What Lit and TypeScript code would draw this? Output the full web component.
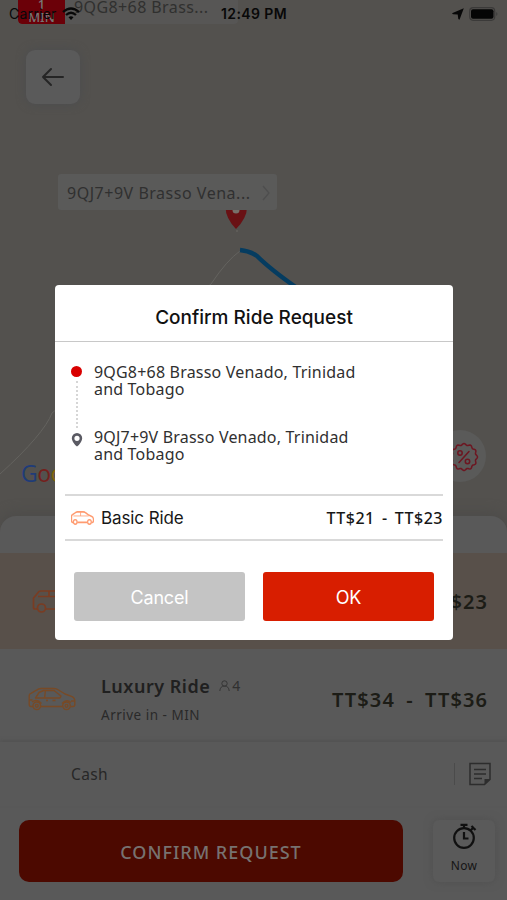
import { LitElement, html, svg, css } from "lit";
import { customElement } from "lit/decorators.js";

const carPaths = svg`
  <path d="M5 19.500H3Q1.200 19.500 1.200 17.500V8.500Q1.200 6.800 3 6.300L8.500 3.200Q10.500 1.800 13 1.500H25.500Q28.500 1.500 30.500 3L37 7L43.500 9.300Q46.800 10.500 46.800 14V17.500Q46.800 19.500 45 19.500H42.500M13 19.500H34" />
  <circle cx="8.800" cy="18.800" r="3.800" /><circle cx="38.500" cy="18.800" r="3.800" />`;

@customElement("app-root")
export class AppRoot extends LitElement {
  static styles = css`
    :host {
      display: block;
      position: relative;
      width: 507px;
      height: 900px;
      overflow: hidden;
      background: #53514e;
      font-family: "Noto Sans", sans-serif;
      color: #272727;
    }
    * { box-sizing: border-box; }
    svg { display: block; fill: none; }
    .screen { display: flex; flex-direction: column; height: 900px; }
    .map { position: relative; height: 516px; flex: none; }
    .roads { position: absolute; inset: 0; }
    .pickup {
      position: absolute; left: 18px; top: 0; width: 220px; height: 24px;
      display: flex; border-radius: 0 0 4px 4px; background: #575655; overflow: hidden;
    }
    .eta {
      width: 47px; height: 24px; background: #6b0008; color: #777;
      font-size: 13px; font-weight: 500; line-height: 13px; text-align: center;
      border-radius: 0 0 0 4px; display: flex; flex-direction: column; justify-content: flex-end;
    }
    .eta span { display: block; }
    .pickup-name { font-size: 16px; line-height: 24px; margin: -5px 0 0 9px; letter-spacing: 0.4px; color: #30302f; white-space: nowrap; }
    .status {
      position: absolute; left: 0; top: 0; width: 507px; height: 27px; padding: 0 8px 0 9px;
      display: grid; grid-template-columns: 1fr auto 1fr; align-items: center;
      font-family: Inter, sans-serif; font-size: 14px; color: #080808;
    }
    .carrier { display: flex; align-items: center; gap: 5px; letter-spacing: 0.25px; }
    .time { font-weight: 600; font-size: 14px; letter-spacing: 0.4px; }
    .power { display: flex; justify-content: flex-end; align-items: center; gap: 5px; }
    .back {
      position: absolute; left: 26px; top: 50px; width: 54px; height: 54px; border-radius: 9px;
      background: #5a5a5a; display: grid; place-items: center; box-shadow: 0 0 10px #4b4d4f;
    }
    .dest {
      position: absolute; left: 58px; top: 174px; width: 219px; height: 36px; border-radius: 3px;
      background: #5a5a59; display: flex; align-items: center; justify-content: space-between;
      padding: 2px 7px 0 9px; font-size: 16px; letter-spacing: 0.52px; color: #303030; white-space: nowrap;
    }
    .google {
      position: absolute; left: 21px; top: 459px; font: 500 23px/28px "Open Sans", sans-serif;
      letter-spacing: -0.6px;
    }
    .g-blue { color: #1f3c78; } .g-red { color: #74201c; } .g-gold { color: #83650a; }
    .promo {
      position: absolute; left: 434px; top: 430px; width: 52px; height: 52px; border-radius: 50%;
      background: #5a5a59; display: grid; place-items: center; padding: 2px 0 0 7px;
    }
    .sheet {
      flex: 1; background: #595959; border-radius: 16px 16px 0 0; padding-top: 37px;
      display: flex; flex-direction: column; box-shadow: 0 -4px 12px #4d4c4a;
    }
    .ride { display: flex; align-items: center; padding: 0 20px 0 28px; }
    .basic { height: 96px; background: #58504a; padding-left: 32px; }
    .luxury { height: 93px; padding-top: 7px; }
    .ride-info { margin-left: 25px; flex: 1; }
    .ride-name { display: flex; align-items: center; gap: 9px; font-size: 18px; line-height: 24px; font-weight: 600; letter-spacing: 0.5px; color: #202020; }
    .seats { display: flex; align-items: center; gap: 2px; font-size: 14px; font-weight: 400; letter-spacing: 0; color: #303030; }
    .arrive { font-size: 13.5px; line-height: 20px; margin-top: 7px; letter-spacing: 0.5px; color: #292929; }
    .fare { font-size: 20px; font-weight: 600; letter-spacing: 1.1px; word-spacing: 5px; color: #1c1c16; white-space: nowrap; margin-right: -1px; }
    .basic .fare { margin-left: auto; }
    .pay {
      height: 64px; display: flex; align-items: center; justify-content: space-between;
      padding: 0 16px 0 71px; box-shadow: 0 -2px 3px #535353; font-size: 15.5px; letter-spacing: 0.35px;
    }
    .note { display: flex; align-items: center; gap: 14px; }
    .divider { width: 1px; height: 22px; background: #4b4b4b; }
    .actions { display: flex; gap: 30px; padding: 14px 12px 0 19px; }
    .confirm {
      width: 384px; height: 62px; border: 0; border-radius: 10px; background: #4c0900; color: #777270;
      font: 500 18px "Noto Sans", sans-serif; letter-spacing: 1px; padding: 2px 0 0;
    }
    .now {
      width: 62px; height: 62px; border-radius: 6px; background: #5a5a5a; box-shadow: 0 0 8px #505050;
      display: flex; flex-direction: column; align-items: center; color: #151515;
      font-size: 12px; letter-spacing: 0.3px; padding-top: 2px; gap: 7px; line-height: 18px;
    }
    .modal {
      position: absolute; left: 55px; top: 285px; width: 398px; height: 355px; border-radius: 4px;
      background: #fff; display: flex; flex-direction: column; color: #303030;
    }
    .title {
      height: 57px; border-bottom: 1px solid #c8c8c8; padding-top: 8px;
      display: flex; align-items: center; justify-content: center;
      font: 500 19px Inter, sans-serif; letter-spacing: 0; color: #111;
    }
    .route { height: 152px; padding: 22px 10px 0 15px; display: grid; grid-template-columns: 13px 1fr; column-gap: 11px; }
    .marks { display: flex; flex-direction: column; align-items: center; padding-top: 2px; }
    .dot { width: 11px; height: 11px; border-radius: 50%; background: #d90000; }
    .dots { height: 47px; border-left: 2px dotted #d6d6d6; margin: 4px 0 5px; }
    .places { display: flex; flex-direction: column; gap: 31px; }
    .place { font-size: 16px; line-height: 17px; letter-spacing: 0.19px; white-space: nowrap; }
    .summary {
      height: 47px; margin: 0 10px; border-top: 2px solid #d9d9d9; border-bottom: 2px solid #d9d9d9;
      display: flex; align-items: center; padding-left: 6px; color: #171717;
    }
    .kind { font: 400 17px Inter, sans-serif; margin-left: 7px; letter-spacing: -0.1px; }
    .price { margin: 1px 0 0 auto; font-size: 16px; font-weight: 500; letter-spacing: 0.5px; word-spacing: 2.5px; white-space: nowrap; }
    .buttons { display: flex; gap: 18px; padding: 31px 19px 0; }
    .btn { flex: 1; height: 49px; border: 0; border-radius: 3px; color: #fff; font: 400 18px Inter, sans-serif; letter-spacing: -0.2px; padding: 1px 0 0; }
    .cancel { background: #c4c4c4; } .ok { background: #d81e00; }
  `;

  render() {
    const badge = Array.from({ length: 97 }, (_, i) => {
      const a = (i / 96) * Math.PI * 2;
      const r = 12.7 + Math.cos(a * 12) * 0.8;
      return `${i ? "L" : "M"}${(15 + r * Math.sin(a)).toFixed(2)} ${(15 - r * Math.cos(a)).toFixed(2)}`;
    }).join("");
    return html`
      <div class="screen">
        <div class="map">
          <svg class="roads" width="507" height="516">
            <path d="M240 251Q227 260 211 284L52 413Q44 434 0 474" stroke="#64635f" stroke-width="1" />
            <path d="M240 250Q250 251 257 256Q270 269 297 288" stroke="#053c60" stroke-width="4.5" />
            <path d="M225.500 207H247Q247 218 236 229Q225.500 218 225.500 207Z" fill="#691114" />
            <circle cx="236" cy="210" r="3.500" fill="#77706a" />
            <circle cx="237" cy="231" r="1" fill="#62605c" />
          </svg>
          <div class="pickup">
            <div class="eta"><span>1</span><span>MIN</span></div>
            <div class="pickup-name">9QG8+68 Brass...</div>
          </div>
          <div class="status">
            <div class="carrier"><span>Carrier</span>
              <svg width="18" height="14" viewBox="0 0 18 14" stroke="#080808" stroke-width="2.300">
                <path d="M1 5Q9-2 17 5M4 8Q9 3.500 14 8" /><path d="M6.500 10.300Q9 8.200 11.500 10.300L9 13Z" fill="#080808" stroke="none" />
              </svg>
            </div>
            <div class="time">12:49 PM</div>
            <div class="power">
              <svg width="12" height="12" viewBox="0 0 12 12"><path d="M11.800.3L0 5.200L1 6.300L5.700 6.500L6.300 11L7.500 11.800Z" fill="#080808" /></svg>
              <svg width="30" height="14" viewBox="0 0 30 14">
                <rect x=".7" y=".7" width="25" height="12.600" rx="3.500" stroke="#3b3a39" stroke-width="1.200" />
                <rect x="2" y="2.200" width="22.500" height="9.600" rx="2" fill="#050505" /><path d="M27.300 5Q29.500 7 27.300 9Z" fill="#3b3a39" />
              </svg>
            </div>
          </div>
          <div class="back">
            <svg width="24" height="20" viewBox="0 0 24 20" stroke="#252525" stroke-width="2" stroke-linecap="round" stroke-linejoin="round"><path d="M22 10H2M10 2L2 10L10 18" /></svg>
          </div>
          <div class="dest"><span>9QJ7+9V Brasso Vena...</span>
            <svg width="8" height="16" viewBox="0 0 8 16" stroke="#4e4e4e" stroke-width="1.300"><path d="M1 1L7 8L1 15" /></svg>
          </div>
          <div class="google"><span class="g-blue">G</span><span class="g-red">o</span><span class="g-gold">o</span></div>
          <div class="promo">
            <svg width="30" height="30" viewBox="0 0 30 30" stroke="#6d1621" stroke-width="1.500">
              <path d="${badge}" stroke-linejoin="round" /><path d="M20 9.500L10 20.500" stroke-linecap="round" />
              <circle cx="11" cy="11" r="2.200" /><circle cx="18.500" cy="19.500" r="2.200" />
            </svg>
          </div>
        </div>
        <div class="sheet">
          <div class="ride basic">
            <svg width="48" height="24" viewBox="0 0 48 24" stroke="#7a3c22" stroke-width="1.700" stroke-linejoin="round">
              <path d="M5 20H3Q1.500 20 1.500 18V9L7 2.500Q7.500 2 9 2H30L40 9L46 11V20H43M14 20H34M6 7.500H40M17 2V7.500" /><circle cx="9.500" cy="19" r="4" /><circle cx="38" cy="19" r="4" />
            </svg>
            <div class="fare">TT$21 - TT$23</div>
          </div>
          <div class="ride luxury">
            <svg width="48" height="24" viewBox="0 0 48 24" stroke="#784a26" stroke-width="1.400" stroke-linejoin="round">
              ${carPaths}
              <path d="M15.500 3.500H26L33 9L32 11H7.500L11 5.500ZM17.500 3.500L16.500 11M18 13.500H20M24.500 13.500H27.500M1.500 13H4.500M46.500 14H43M4 15Q9 11.500 13.500 16.500M34 16.500Q38.500 11.500 43 15.500" />
              <circle cx="8.800" cy="18.800" r="1.400" /><circle cx="38.500" cy="18.800" r="1.400" />
            </svg>
            <div class="ride-info">
              <div class="ride-name"><span>Luxury Ride</span>
                <span class="seats"><svg width="11" height="12" viewBox="0 0 11 12" stroke="#363636"><circle cx="5.500" cy="3.500" r="2.700" /><path d="M.8 11Q1.200 6 5.500 6Q9.800 6 10.200 11" /></svg>4</span>
              </div>
              <div class="arrive">Arrive in - MIN</div>
            </div>
            <div class="fare">TT$34 - TT$36</div>
          </div>
          <div class="pay"><span>Cash</span>
            <div class="note"><div class="divider"></div>
              <svg width="22" height="24" viewBox="0 0 22 24" stroke="#2d2d2d" stroke-width="1.500"><path d="M1 1.500H21V17.500L15.500 22.500H1ZM5 7.500H17M5 12H17M5 16.500H13" /><path d="M21 17H15.500V22.500Z" fill="#2d2d2d" stroke="none" /></svg>
            </div>
          </div>
          <div class="actions">
            <button class="confirm">CONFIRM REQUEST</button>
            <div class="now">
              <svg width="25" height="28" viewBox="0 0 25 28" stroke="#101010" stroke-width="2.200"><circle cx="12" cy="16" r="9.800" /><path d="M12 10V16.500H16.500M12 6V3M8.500 2.800H15.500M18.500 8.500L22 5M19.500 4L23.500 8" /></svg>
              <span>Now</span>
            </div>
          </div>
        </div>
      </div>
      <div class="modal">
        <div class="title">Confirm Ride Request</div>
        <div class="route">
          <div class="marks"><div class="dot"></div><div class="dots"></div>
            <svg width="12" height="14" viewBox="0 0 12 14"><path fill-rule="evenodd" d="M6 0A5.200 5.200 0 0 1 11.200 5.200Q11 9.500 6 13.500Q1 9.500.8 5.200A5.200 5.200 0 0 1 6 0ZM6 2.700A2.600 2.600 0 1 0 6 7.900A2.600 2.600 0 1 0 6 2.700Z" fill="#5a5a63" /></svg>
          </div>
          <div class="places">
            <div class="place">9QG8+68 Brasso Venado, Trinidad<br />and Tobago</div>
            <div class="place">9QJ7+9V Brasso Venado, Trinidad<br />and Tobago</div>
          </div>
        </div>
        <div class="summary">
          <svg width="23" height="14" viewBox="0 0 48 24" preserveAspectRatio="none" stroke="#ff9b70" stroke-width="2.600">
            ${carPaths}<path d="M5 8.500H37M20 2V8.500" stroke-width="1.500" />
          </svg>
          <span class="kind">Basic Ride</span><span class="price">TT$21 - TT$23</span>
        </div>
        <div class="buttons"><button class="btn cancel">Cancel</button><button class="btn ok">OK</button></div>
      </div>
    `;
  }
}
